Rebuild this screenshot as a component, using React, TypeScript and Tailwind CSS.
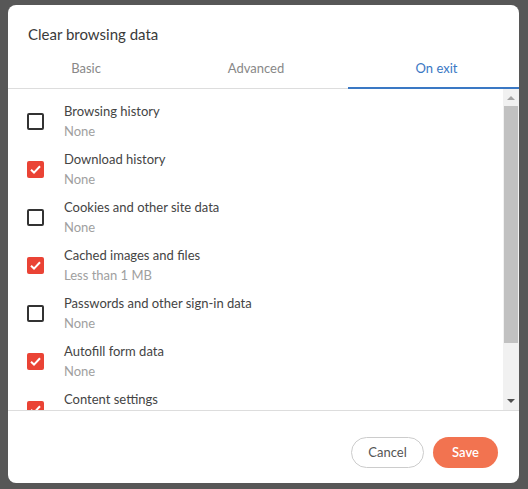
import React from 'react';

type Item = { label: string; sub: string; checked: boolean };

const items: Item[] = [
  { label: 'Browsing history', sub: 'None', checked: false },
  { label: 'Download history', sub: 'None', checked: true },
  { label: 'Cookies and other site data', sub: 'None', checked: false },
  { label: 'Cached images and files', sub: 'Less than 1 MB', checked: true },
  { label: 'Passwords and other sign-in data', sub: 'None', checked: false },
  { label: 'Autofill form data', sub: 'None', checked: true },
  { label: 'Content settings', sub: 'None', checked: true },
];

const Checkbox: React.FC<{ checked: boolean }> = ({ checked }) =>
  checked ? (
    <div className="w-[17px] h-[17px] rounded-[2px] bg-[#ea4335] flex items-center justify-center">
      <svg width="17" height="17" viewBox="0 0 17 17">
        <path d="M4 8.8 L7 11.6 L13 5.2" fill="none" stroke="white" strokeWidth="2" />
      </svg>
    </div>
  ) : (
    <div className="w-[17px] h-[17px] rounded-[2px] border-2 border-[#333]" />
  );

const App: React.FC = () => {
  return (
    <div
      className="w-[528px] h-[489px] bg-[#575757] pl-[8px] pt-[5px]"
      style={{ fontFamily: 'Lato, "Noto Sans", sans-serif' }}
    >
      <div className="w-[511px] h-[478px] bg-white rounded-[8px] flex flex-col overflow-hidden">
        {/* Title */}
        <div className="h-[54px] pl-[20px] pt-[18px] text-[15px] text-[#3a3a3a]">Clear browsing data</div>

        {/* Tabs */}
        <div className="flex h-[30px] border-b border-[#ddd] text-[13px]">
          <div className="w-[156px] text-center text-[#888]">Basic</div>
          <div className="w-[184px] text-center text-[#888]">Advanced</div>
          <div className="flex-1 pl-[6px] text-center text-[#3a78c4] border-b-2 border-[#3a78c4] -mb-px">On exit</div>
        </div>

        {/* List */}
        <div className="flex h-[322px] border-b border-[#ddd]">
          <div className="flex-1 overflow-hidden pt-[8px]">
            {items.map((it) => (
              <div key={it.label} className="flex items-center h-[48px]">
                <div className="w-[56px] pl-[19px]">
                  <Checkbox checked={it.checked} />
                </div>
                <div className="flex flex-col gap-[4px] text-[13px] leading-[16px]">
                  <span className="text-[#444]">{it.label}</span>
                  <span className="text-[#a0a0a0]">{it.sub}</span>
                </div>
              </div>
            ))}
          </div>
          {/* Scrollbar */}
          <div className="w-[16px] bg-[#f1f1f1] flex flex-col items-center">
            <div className="h-[17px] flex items-center justify-center">
              <svg width="8" height="5" viewBox="0 0 8 5">
                <path d="M0 5 L4 1 L8 5 Z" fill="#a3a3a3" />
              </svg>
            </div>
            <div className="w-[14px] h-[237px] bg-[#c1c1c1]" />
            <div className="flex-1" />
            <div className="h-[17px] flex items-center justify-center">
              <svg width="8" height="5" viewBox="0 0 8 5">
                <path d="M0 0 L4 4 L8 0 Z" fill="#505050" />
              </svg>
            </div>
          </div>
        </div>

        {/* Footer */}
        <div className="flex-1 flex items-center justify-end gap-[9px] pr-[21px] pt-[11px]">
          <button className="w-[73px] h-[31px] rounded-full border border-[#ccc] text-[13px] text-[#555]">
            Cancel
          </button>
          <button className="w-[65px] h-[31px] rounded-full bg-[#f27350] text-[13px] font-semibold text-white">
            Save
          </button>
        </div>
      </div>
    </div>
  );
};

export default App;
